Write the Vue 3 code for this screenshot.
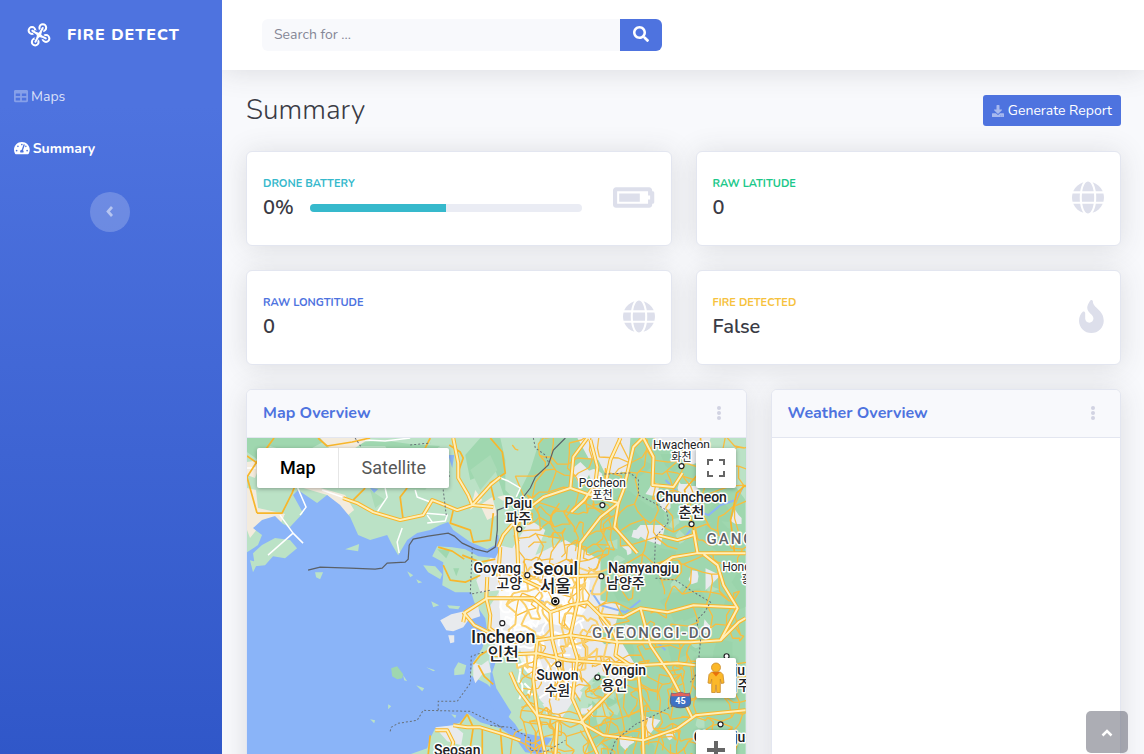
<script setup>
import { ref } from 'vue'

const query = ref('')

const globe = {
  box: '0 0 496 512',
  path: 'M336.5 160C322 70.7 287.8 8 248 8s-74 62.7-88.5 152h177zM152 256c0 22.2 1.2 43.5 3.3 64h185.3c2.1-20.5 3.3-41.8 3.3-64s-1.2-43.5-3.3-64H155.3c-2.1 20.5-3.3 41.8-3.3 64zm324.7-96c-28.6-67.9-86.5-120.4-158-141.6 24.4 33.8 41.2 84.7 50 141.6h108zM177.2 18.4C105.8 39.6 47.8 92.1 19.3 160h108c8.7-56.9 25.5-107.8 49.9-141.6zM487.4 192H372.7c2.1 21 3.3 42.5 3.3 64s-1.2 43-3.3 64h114.6c5.5-20.5 8.6-41.8 8.6-64s-3.1-43.5-8.5-64zM120 256c0-21.5 1.2-43 3.3-64H8.6C3.2 212.5 0 233.8 0 256s3.2 43.5 8.6 64h114.6c-2-21-3.2-42.5-3.2-64zm39.5 96c14.5 89.3 48.7 152 88.5 152s74-62.7 88.5-152h-177zm159.3 141.6c71.4-21.2 129.4-73.7 158-141.6h-108c-8.8 56.9-25.6 107.8-50 141.6zM19.3 352c28.6 67.9 86.5 120.4 158 141.6-24.4-33.8-41.2-84.7-50-141.6h-108z'
}

const cards = [
  {
    label: 'Drone battery', value: '0%', tone: 'info', progress: 50,
    icon: {
      box: '0 0 640 512',
      path: 'M544 160v64h32v64h-32v64H64V160h480m16-64H48c-26.51 0-48 21.49-48 48v224c0 26.51 21.49 48 48 48h512c26.51 0 48-21.49 48-48v-16h8c13.255 0 24-10.745 24-24V184c0-13.255-10.745-24-24-24h-8v-16c0-26.51-21.49-48-48-48zm-144 96H96v128h320V192z'
    }
  },
  { label: 'Raw latitude', value: '0', tone: 'success', icon: globe },
  { label: 'Raw longtitude', value: '0', tone: 'primary', icon: globe },
  {
    label: 'Fire detected', value: 'False', tone: 'warning',
    icon: {
      box: '0 0 384 512',
      path: 'M216 23.86c0-23.8-30.65-32.77-44.15-13.04C48 191.85 224 200 224 288c0 35.63-29.11 64.46-64.85 63.99-35.17-.45-63.15-29.77-63.15-64.94v-85.51c0-21.7-26.47-32.23-41.43-16.5C27.8 213.16 0 261.33 0 320c0 105.87 86.13 192 192 192s192-86.13 192-192c0-170.29-168-193-168-296.14z'
    }
  }
]

// Map geometry: main highways
const highways = [
  '453,438 458,463 458,478 468,495 472,505 493,507',
  '343,498 357,503 373,512 400,520 423,515 432,500 440,503 457,510 472,505 490,485 500,477',
  '587,438 573,457 570,488 543,497 522,513 515,527 517,545 518,570',
  '642,438 633,447 623,490 618,503 600,517 580,543 577,570',
  '590,440 597,467 595,483 584,500 571,512',
  '620,438 610,460 606,480 590,495',
  '643,438 653,457 652,485 673,487 682,473',
  '500,547 498,575 503,590',
  '522,513 503,535 498,547',
  '570,488 590,495 618,503',
  '618,503 614,527 637,553',
  '693,530 697,553 745,553',
  '697,553 672,557 657,567 640,565 618,575',
  '657,535 677,540 693,535',
  '513,598 533,598 550,612 570,605 587,602 600,615 623,617 640,608 667,612 693,605 735,607',
  '577,565 578,598 570,635 577,658 572,698 587,732 597,754',
  '500,570 520,578 545,590 570,576 600,575',
  '490,640 537,640 570,635 617,642 690,642 720,640 737,608 723,585 717,565 703,554',
  '490,655 537,653 567,660 637,665 677,663 695,665',
  '640,608 650,645 670,675 687,708 692,718',
  '510,672 517,688 537,715 580,722 603,735 643,740 677,728 695,715 745,710',
  '643,754 642,715 637,665',
  '617,642 615,655 634,668 597,705 580,722',
  '537,640 533,680 537,715 545,754',
  '557,722 555,754',
  '463,622 465,612 487,598 500,598 513,598',
  '487,577 486,598 490,615 489,628 505,640',
  '463,612 474,625 488,632',
  '600,615 612,630 617,642',
  '550,612 552,640 560,672 557,700',
  '453,725 467,727 480,727 500,733 520,740',
  '435,730 447,730 453,742 450,754',
  '720,640 738,622 745,618'
]

const byways = [
  '257,513 247,477 258,460 274,438', '257,513 282,513 292,493 296,483',
  '403,520 400,497 407,488', '353,500 365,488',
  '453,510 450,523 470,530 473,542 490,540 493,513',
  '318,438 327,446 352,442 370,438', '430,438 425,448', '247,456 257,463',
  '490,438 502,452 505,473 490,483 494,500',
  '443,565 450,580 465,582 480,575', '462,555 480,562 495,559',
  '438,547 452,551 464,559', '473,664 480,655 488,650', '478,665 484,676 493,684',
  '467,714 460,724', '467,714 473,727 469,754', '482,728 482,754', '430,735 428,754',
  '500,728 502,754', '449,445 460,452 463,458 458,472',
  '700,438 701,470 684,490 693,530', '745,485 736,493 730,520 734,553'
]

const paleRoads = [
  '280,515 293,533 268,555', '293,533 303,543', '377,512 387,497 385,488',
  '402,528 397,542 399,553', '423,513 447,515 445,521 427,523', '427,515 432,522',
  '296,484 306,507 300,515', '365,440 385,441 410,438', '322,490 342,497',
  '415,490 417,497 430,502', '500,478 508,481 520,488 516,497', '247,468 256,468'
]

// Secondary road mesh over the inland area, from a small seeded generator
let seed = 29
function rand() {
  seed = (seed * 16807) % 2147483647
  return seed / 2147483647
}

function mesh(x0, y0, cols, rows, step, keep) {
  const pts = []
  for (let r = 0; r <= rows; r++) {
    const line = []
    for (let c = 0; c <= cols; c++) {
      line.push([
        Math.round(x0 + c * step + (rand() - 0.5) * step),
        Math.round(y0 + r * step + (rand() - 0.5) * step)
      ])
    }
    pts.push(line)
  }
  let d = ''
  const join = (a, b) => {
    const mx = Math.round((a[0] + b[0]) / 2 + (rand() - 0.5) * step * 0.5)
    const my = Math.round((a[1] + b[1]) / 2 + (rand() - 0.5) * step * 0.5)
    d += `M${a}L${mx},${my}L${b}`
  }
  for (let r = 0; r <= rows; r++) {
    for (let c = 0; c <= cols; c++) {
      if (c < cols && rand() < keep) join(pts[r][c], pts[r][c + 1])
      if (r < rows && rand() < keep) join(pts[r][c], pts[r + 1][c])
    }
  }
  return d
}

const minorRoads = mesh(520, 440, 14, 20, 17, 0.68)
const northRoads = mesh(522, 500, 8, 7, 11, 0.55)
const cityRoads = mesh(512, 568, 8, 8, 12, 0.6)
const southRoads = mesh(526, 664, 14, 8, 12, 0.55)
const cityStreets = mesh(503, 575, 11, 10, 7, 0.55)
const suburbStreets = mesh(518, 655, 7, 5, 8, 0.3)

function patches(x0, y0, w, h, n, size) {
  let d = ''
  for (let i = 0; i < n; i++) {
    const cx = x0 + rand() * w
    const cy = y0 + rand() * h
    for (let k = 0; k < 7; k++) {
      const a = (k / 7) * Math.PI * 2
      const s = size * (0.35 + rand())
      d += `${k ? 'L' : 'M'}${Math.round(cx + Math.cos(a) * s)},${Math.round(cy + Math.sin(a) * s)}`
    }
    d += 'Z'
  }
  return d
}

const forest = patches(600, 445, 150, 310, 24, 17)
const meadows = patches(590, 450, 155, 330, 26, 6)
const towns = patches(525, 445, 225, 310, 22, 7)
const hills = patches(525, 650, 100, 100, 12, 10)

const places = [
  { en: 'Paju', ko: '파주', x: 518, y: 508, kind: 'city', dot: [519, 529] },
  { en: 'Pocheon', ko: '포천', x: 602, y: 487, kind: 'town', dot: [602, 505] },
  { en: 'Hwacheon', ko: '화천', x: 681, y: 449, kind: 'town', dot: [681, 466] },
  { en: 'Chuncheon', ko: '춘천', x: 691, y: 502, kind: 'city', dot: [691, 524] },
  { en: 'Goyang', ko: '고양', x: 497, y: 573, kox: 509, kind: 'city', dot: [527, 575] },
  { en: 'Seoul', ko: '서울', x: 555, y: 575, kind: 'capital' },
  { en: 'Namyangju', ko: '남양주', x: 643, y: 573, kox: 625, kind: 'city', dot: [601, 576] },
  { en: 'Incheon', ko: '인천', x: 503, y: 643, kind: 'capital', dot: [502, 623] },
  { en: 'Suwon', ko: '수원', x: 557, y: 680, kind: 'city', dot: [558, 664] },
  { en: 'Yongin', ko: '용인', x: 624, y: 675, kox: 614, kind: 'city', dot: [597, 677] },
  { en: 'Hong', ko: '홍', x: 736, y: 571, kox: 746, kind: 'town' },
  { en: 'Seosan', ko: '서산', x: 457, y: 755, kind: 'city' },
  { en: 'Yeoju', ko: '여주', x: 727, y: 675, kox: 737, kind: 'city', dot: [726, 656] },
  { en: 'Chungju', ko: '충주', x: 719, y: 742, kind: 'city', dot: [720, 724] }
]

const koShift = { capital: 17, city: 15, town: 12 }
</script>

<template>
  <div class="shell">
    <aside class="sidebar">
      <a class="brand" href="#">
        <svg class="drone" viewBox="0 0 24 24" aria-hidden="true">
          <g class="rotors">
            <circle cx="5" cy="7.500" r="3.400" />
            <circle cx="15.800" cy="4.700" r="3.400" />
            <circle cx="19" cy="15.500" r="3.400" />
            <circle cx="8.200" cy="19" r="3.400" />
          </g>
          <path class="arm-gap" d="M7 8.800 12 12 15 6.500M9 17 12 12 17.500 15" />
          <path class="arms" d="M5.300 7.700 12 12 15.700 5M8.400 18.700 12 12 18.800 15.400" />
          <path fill="currentColor" fill-rule="evenodd" d="M8.800 9 12 9.800 14.800 8.600 14.300 11.500 15.400 14.600 12.300 14.200 9.500 15.500 9.800 12ZM11.200 11.200V13H13V11.200Z" />
        </svg>
        <span>FIRE DETECT</span>
      </a>
      <nav class="menu">
        <a class="item" href="#maps">
          <svg class="item-icon" viewBox="0 0 512 512" aria-hidden="true"><path fill="currentColor" d="M464 32H48C21.490 32 0 53.490 0 80v352c0 26.510 21.490 48 48 48h416c26.510 0 48-21.490 48-48V80c0-26.510-21.490-48-48-48zM224 416H64v-96h160v96zm0-160H64v-96h160v96zm224 160H288v-96h160v96zm0-160H288v-96h160v96z" /></svg>
          <span>Maps</span>
        </a>
        <a class="item active" href="#summary" aria-current="page">
          <svg class="item-icon" viewBox="0 0 576 512" aria-hidden="true"><path fill="currentColor" d="M288 32C128.940 32 0 160.940 0 320c0 52.800 14.250 102.260 39.060 144.800 5.610 9.620 16.300 15.200 27.440 15.200h443c11.140 0 21.830-5.580 27.440-15.200C561.750 422.260 576 372.800 576 320c0-159.060-128.940-288-288-288zm0 64c14.710 0 26.580 10.130 30.320 23.650-1.110 2.260-2.640 4.230-3.450 6.670l-9.220 27.670c-5.130 3.490-10.970 6.010-17.640 6.010-17.670 0-32-14.330-32-32S270.330 96 288 96zM96 384c-17.670 0-32-14.330-32-32s14.330-32 32-32 32 14.330 32 32-14.330 32-32 32zm48-160c-17.670 0-32-14.330-32-32s14.330-32 32-32 32 14.330 32 32-14.330 32-32 32zm246.770-72.410l-61.330 184C343.130 347.330 352 364.540 352 384c0 11.720-3.380 22.550-8.880 32H232.880c-5.500-9.450-8.880-20.280-8.880-32 0-33.940 26.500-61.430 59.900-63.590l61.340-184.010c4.170-12.560 17.730-19.450 30.360-15.170 12.570 4.190 19.350 17.790 15.170 30.360zm14.660 57.200l15.520-46.550c3.470-1.290 7.130-2.230 11.050-2.230 17.670 0 32 14.330 32 32s-14.330 32-32 32c-11.380-.010-20.890-6.280-26.570-15.220zM480 384c-17.670 0-32-14.330-32-32s14.330-32 32-32 32 14.330 32 32-14.330 32-32 32z" /></svg>
          <span>Summary</span>
        </a>
      </nav>
      <button class="collapse" type="button" aria-label="Collapse sidebar">
        <svg viewBox="0 0 12 14" width="12" height="14" aria-hidden="true"><path d="M8 2 4 6.500 8 11" fill="none" stroke="currentColor" stroke-width="2.700" /></svg>
      </button>
    </aside>

    <div class="page">
      <header class="topbar">
        <form class="search" @submit.prevent>
          <input v-model="query" type="text" placeholder="Search for ..." aria-label="Search" />
          <button type="submit" aria-label="Search">
            <svg viewBox="0 0 512 512" width="16" height="16" aria-hidden="true"><path fill="currentColor" d="M505 442.700L405.300 343c-4.500-4.500-10.600-7-17-7H372c27.600-35.300 44-79.700 44-128C416 93.100 322.900 0 208 0S0 93.100 0 208s93.100 208 208 208c48.300 0 92.700-16.400 128-44v16.300c0 6.400 2.500 12.500 7 17l99.700 99.700c9.400 9.400 24.600 9.400 33.900 0l28.300-28.300c9.400-9.400 9.400-24.600.1-34zM208 336c-70.700 0-128-57.200-128-128 0-70.700 57.200-128 128-128 70.700 0 128 57.200 128 128 0 70.700-57.200 128-128 128z" /></svg>
          </button>
        </form>
      </header>

      <main class="content">
        <div class="heading">
          <h1>Summary</h1>
          <button class="report" type="button">
            <svg viewBox="0 0 512 512" width="12" height="12" aria-hidden="true"><path fill="currentColor" d="M216 0h80c13.300 0 24 10.700 24 24v168h87.700c17.800 0 26.700 21.500 14.100 34.100L269.700 378.300c-7.500 7.500-19.800 7.500-27.300 0L90.100 226.100c-12.600-12.600-3.700-34.100 14.100-34.100H192V24c0-13.300 10.700-24 24-24zm296 376v112c0 13.300-10.700 24-24 24H24c-13.300 0-24-10.700-24-24V376c0-13.300 10.700-24 24-24h146.700l49 49c20.100 20.100 52.500 20.100 72.600 0l49-49H488c13.300 0 24 10.700 24 24zm-124 88c0-11-9-20-20-20s-20 9-20 20 9 20 20 20 20-9 20-20zm64 0c0-11-9-20-20-20s-20 9-20 20 9 20 20 20 20-9 20-20z" /></svg>
            <span>Generate Report</span>
          </button>
        </div>

        <section class="stats">
          <article v-for="card in cards" :key="card.label" class="card stat">
            <div class="stat-text">
              <h2 class="stat-label" :class="card.tone">{{ card.label.toUpperCase() }}</h2>
              <div class="stat-row">
                <span class="stat-value">{{ card.value }}</span>
                <div v-if="card.progress" class="track" role="progressbar" aria-label="Battery">
                  <div class="fill" :style="{ width: card.progress + '%' }"></div>
                </div>
              </div>
            </div>
            <svg class="stat-icon" :viewBox="card.icon.box" aria-hidden="true">
              <path fill="currentColor" :d="card.icon.path" />
            </svg>
          </article>
        </section>

        <section class="panels">
          <article class="card panel">
            <header class="panel-head">
              <h2>Map Overview</h2>
              <button class="dots" type="button" aria-label="Map options">
                <svg viewBox="0 0 6 14" width="6" height="14" aria-hidden="true"><g fill="currentColor"><circle cx="3" cy="2" r="2" /><circle cx="3" cy="7" r="2" /><circle cx="3" cy="12" r="2" /></g></svg>
              </button>
            </header>
            <div class="map">
              <svg class="map-art" viewBox="247 438 498 460" preserveAspectRatio="xMidYMin slice" aria-label="Map of the Seoul area">
                <rect x="247" y="438" width="498" height="460" fill="#bbe2c6" />
                <path fill="#9fd7af" d="M247,438H330L312,448 290,452 270,446 258,460 247,452ZM340,446 380,440 410,444 440,446 420,460 400,470 385,446ZM480,438H745V898H600L585,720 600,640 590,600 575,570 560,540 530,530 505,500 495,470 470,480 465,455Z" />
                <path fill="#bbe2c6" d="M500,438 540,438 530,470 515,500 505,490 505,460ZM745,438 745,500 730,480 720,460 700,438Z" />
                <path fill="#aadbb7" d="M470,470 490,455 497,470 480,490ZM425,450 445,448 440,470 425,490 405,489ZM370,490 385,500 375,508Z" />
                <path :d="hills" fill="#bbe2c6" />
                <path :d="forest" fill="#93cfa5" opacity="0.4" />
                <path :d="meadows" fill="#bbe2c6" opacity="0.75" />
                <path fill="#f3ebdd" d="M320,438H370L355,448 330,449ZM247,488 256,490 258,508 285,514 280,525 262,523 250,538 247,530ZM293,486 310,485 345,495 354,510 348,515 327,495 300,487ZM480,505 492,497 497,515 487,520ZM247,462 262,460 255,478 247,475ZM475,490 482,500 470,510ZM497,497 505,495 503,501Z" />
                <path fill="#e8eaed" d="M577,438H630L628,462 618,475 604,472 598,460 588,458ZM653,438H710L705,460 690,465 682,450 665,448ZM570,470 580,462 590,472 582,488ZM640,525 665,525 660,545 645,540 634,532ZM498,545 512,548 530,520 545,530 535,555 565,540 600,560 600,600 620,605 615,625 590,630 610,650 600,670 580,690 560,720 540,700 520,650 500,655 490,635 490,605 500,590 480,592 476,580ZM705,568 720,575 705,590ZM590,650 620,640 635,665 620,680 600,675ZM640,715 660,720 645,740Z" />
                <path :d="towns" fill="#e8eaed" />
                <path fill="#fff" opacity="0.7" d="M498,582 520,575 545,580 572,570 590,580 585,610 570,628 545,622 520,632 500,620ZM518,655 540,660 545,675 525,670Z" />

                <path fill="#8ab4f8" d="M247,552 258,545 262,535 253,528 262,520 275,516 283,524 290,527 303,513 293,495 298,490 317,503 327,495 340,505 350,517 358,535 370,540 387,535 392,545 398,555 407,540 417,533 430,530 440,525 448,522 453,530 470,542 487,549 495,545 497,535 499,550 495,558 478,556 465,549 452,547 437,546 432,556 443,562 443,575 442,585 455,592 471,592 474,602 485,618 487,632 482,648 473,662 470,675 487,684 493,690 495,702 515,724 520,732 534,735 552,738 540,754 525,752 515,738 500,728 480,722 467,713 460,722 453,725 435,728 430,738 427,748 410,754 400,898 247,898Z" />
                <path fill="#8ab4f8" d="M490,655 496,660 492,672 496,688 511,712 505,722 490,705ZM448,455 454,455 452,468ZM370,488 378,489 374,493Z" />
                <path fill="none" stroke="#8ab4f8" stroke-width="2" d="M690,530 682,540M742,488 735,500 720,505 708,515 700,512M590,590 600,605 625,612 640,600M655,640 665,650M497,535 498,547M538,600 565,608M665,480 675,490 678,500" />
                <path fill="#bbe2c6" d="M253,553 262,545 275,538 290,540 297,548 285,558 273,556 265,565 255,566ZM315,572 323,572 320,579 316,577ZM250,560 258,562 253,572ZM423,565 435,566 442,574 440,579 428,572ZM407,571 413,575 410,577ZM416,579 422,582 418,583ZM431,601 439,605 433,607ZM447,605 460,606 458,609 449,608ZM426,667 435,670 433,671ZM454,669 458,662 466,665 464,674 454,675ZM416,685 424,688 422,691ZM388,704 391,706 388,709ZM370,719 375,720 374,723ZM403,675 407,681 404,680ZM284,515 293,520 287,527ZM451,714 456,715 455,718ZM345,549 359,544 358,551Z" />
                <path fill="#9fd7af" d="M391,668 397,666 403,674 402,678 397,679 392,676ZM437,549 450,550 446,558ZM453,568 459,568 456,576Z" />
                <path fill="#e8eaed" d="M440,620 451,614 464,611 478,606 480,616 468,620 463,627 453,631 446,630ZM448,635 454,635 454,642 450,643ZM473,662 481,665 488,660 491,672 482,674 475,683 473,677ZM435,727 453,725 463,733 461,745 447,741 440,733Z" />

                <path :d="cityStreets" class="street" />
                <path :d="suburbStreets" class="street" />
                <path :d="minorRoads" class="minor" />
                <path :d="northRoads" class="minor" />
                <path :d="southRoads" class="minor" />
                <path :d="cityRoads" class="minor soft" />
                <polyline v-for="(p, i) in paleRoads" :key="'p' + i" :points="p" class="pale" />
                <polyline v-for="(p, i) in byways" :key="'b' + i" :points="p" class="byway" />
                <polyline v-for="(p, i) in highways" :key="'c' + i" :points="p" class="casing" />
                <polyline v-for="(p, i) in highways" :key="'h' + i" :points="p" class="highway" />

                <path class="border" d="M308,570 320,567 350,568 375,569 382,568 387,563 405,562 408,559 409,545 413,539 428,536 448,533 454,536 462,543 475,549 487,552 495,547 497,530 497,510 508,506 523,497 530,488 535,477 548,465 553,450 565,438" />
                <path class="bounds" d="M355,438 361,447M410,445 430,443M447,455 449,478 443,490 446,515M533,438 535,448 545,455 548,462M604,474 630,473 638,480 638,495 652,502 666,510 668,522 655,537 654,565M472,548 470,594 490,590M390,731 391,727 398,723 417,720 423,710 470,711 502,727M438,710 438,701 457,701 470,683 471,656 483,652M490,725 510,727 530,738 530,750 546,751 565,740M655,578 675,580 690,590 710,602 704,612 696,620 700,640 697,672 690,682M610,754 615,740 635,724 662,711 682,700" />

                <g v-for="p in places" :key="p.en" :class="['place', p.kind]">
                  <circle v-if="p.dot" :cx="p.dot[0]" :cy="p.dot[1]" r="2.500" class="dot" />
                  <text :x="p.x" :y="p.y">{{ p.en }}</text>
                  <text :x="p.kox || p.x" :y="p.y" :dy="koShift[p.kind]" class="ko">{{ p.ko }}</text>
                </g>
                <circle cx="555" cy="601" r="3.500" fill="#fff" stroke="#111" stroke-width="1.500" />
                <circle cx="555" cy="601" r="1.700" fill="#111" />
                <text x="652" y="638" class="region">GYEONGGI-DO</text>
                <text x="706" y="544" class="region start">GANGWON</text>

                <path fill="#3e72c4" stroke="#5b6b82" stroke-width="1" d="M671,693Q675,694 680,692Q685,694 689,693Q692,705 687,706Q680,709 673,706Q668,705 671,693Z" />
                <path fill="#e2625b" d="M671,693Q675,694 680,692Q685,694 689,693L689,696H671Z" />
                <text x="680" y="704" class="shield">45</text>
              </svg>

              <div class="map-types">
                <button type="button" class="current" aria-pressed="true">Map</button>
                <button type="button" aria-pressed="false">Satellite</button>
              </div>
              <button class="map-btn full" type="button" aria-label="Toggle fullscreen view">
                <svg viewBox="0 0 18 18" width="18" height="18" aria-hidden="true"><path fill="#666" d="M0 0v6h2V2h4V0H0zm16 0h-4v2h4v4h2V0h-2zm0 16h-4v2h6v-6h-2v4zM2 12H0v6h6v-2H2v-4z" /></svg>
              </button>
              <button class="map-btn person" type="button" aria-label="Street View">
                <svg viewBox="0 0 18 32" width="18" height="32" aria-hidden="true">
                  <path fill="#fbb829" stroke="#c98a2a" stroke-width="0.800" d="M4.500 10H13.500L16 12.500 17 21 14.300 21.500 13.300 17V30.500H9.700L9.300 23H8.700L8.300 30.500H4.700V17L3.700 21.500 1 21 2 12.500Z" />
                  <path fill="#e8710a" d="M5 10H13L9 14.500Z" />
                  <circle cx="9" cy="5.500" r="4.500" fill="#fbb829" stroke="#c98a2a" stroke-width="0.800" />
                </svg>
              </button>
              <button class="map-btn zoom" type="button" aria-label="Zoom in">
                <svg viewBox="0 0 18 18" width="18" height="18" aria-hidden="true"><path fill="#666" d="M18 7h-7V0H7v7H0v4h7v7h4v-7h7z" /></svg>
              </button>
            </div>
          </article>

          <article class="card panel">
            <header class="panel-head">
              <h2>Weather Overview</h2>
              <button class="dots" type="button" aria-label="Weather options">
                <svg viewBox="0 0 6 14" width="6" height="14" aria-hidden="true"><g fill="currentColor"><circle cx="3" cy="2" r="2" /><circle cx="3" cy="7" r="2" /><circle cx="3" cy="12" r="2" /></g></svg>
              </button>
            </header>
          </article>
        </section>
      </main>
    </div>

    <a class="to-top" href="#" aria-label="Back to top">
      <svg viewBox="0 0 14 10" width="14" height="10" aria-hidden="true"><path d="M2.500 8.500 7 4 11.500 8.500" fill="none" stroke="currentColor" stroke-width="2.500" /></svg>
    </a>
  </div>
</template>

<style>
html,
body,
#app {
  height: 100%;
}
body {
  margin: 0;
}
</style>

<style scoped>
.shell {
  display: flex;
  align-items: flex-start;
  height: 100%;
  overflow-y: auto;
  scrollbar-width: none;
  background: #f8f9fc;
  color: #3a3b45;
  font-family: Nunito, Lato, "Open Sans", sans-serif;
  font-size: 14px;
}
.shell *,
.shell *::before {
  box-sizing: border-box;
}
button,
input {
  font: inherit;
  border: 0;
}
button {
  cursor: pointer;
  padding: 0;
}
a {
  text-decoration: none;
}
h1,
h2 {
  margin: 0;
}
svg {
  display: block;
  flex: none;
}
.sidebar {
  position: relative;
  z-index: 1;
  flex: 0 0 222px;
  min-height: 1058px;
  background: linear-gradient(180deg, #4e73df 10%, #224abe 100%);
  display: flex;
  flex-direction: column;
}
.brand {
  display: flex;
  align-items: center;
  gap: 16px;
  height: 70px;
  padding-left: 27px;
  color: #fff;
  font-size: 16px;
  font-weight: 800;
  letter-spacing: 1px;
}
.drone {
  width: 24px;
  height: 24px;
}
.rotors,
.arms {
  fill: none;
  stroke: currentColor;
  stroke-width: 2px;
}
.arms {
  stroke-linecap: round;
}
.arm-gap {
  fill: none;
  stroke: #4e73df;
  stroke-width: 4px;
}
.item {
  display: flex;
  align-items: center;
  gap: 3px;
  height: 52px;
  padding: 0 14px;
  color: rgba(255, 255, 255, 0.8);
}
.item-icon {
  height: 14px;
  opacity: 0.4;
}
.item.active {
  color: #fff;
  font-weight: 700;
}
.item.active .item-icon {
  opacity: 1;
}
.collapse {
  display: grid;
  place-items: center;
  width: 40px;
  height: 40px;
  margin: 18px auto 0 90px;
  border-radius: 50%;
  background: rgba(255, 255, 255, 0.2);
  color: rgba(255, 255, 255, 0.5);
}
.page {
  flex: 1;
  min-width: 0;
}
.topbar {
  display: flex;
  align-items: center;
  height: 70px;
  padding: 0 40px;
  background: #fff;
  box-shadow: 0 2px 28px rgba(58, 59, 69, 0.15);
}
.search {
  display: flex;
  flex: 0 1 400px;
  height: 32px;
}
.search input {
  flex: 1;
  min-width: 0;
  padding: 0 12px 2px;
  border-radius: 6px 0 0 6px;
  background: #f8f9fc;
  color: #6e707e;
}
.search input::placeholder {
  color: #858796;
  opacity: 1;
}
.search button {
  display: grid;
  place-items: center;
  width: 42px;
  padding-bottom: 2px;
  border-radius: 0 6px 6px 0;
  background: #4e73df;
  color: #fff;
}
.content {
  padding: 24px 23px 24px 24px;
}
.heading {
  display: flex;
  align-items: center;
  justify-content: space-between;
  height: 33px;
  margin-bottom: 24px;
}
h1 {
  padding-bottom: 2px;
  font-size: 28px;
  font-weight: 300;
  line-height: 32px;
}
.report {
  display: flex;
  align-items: center;
  gap: 4px;
  height: 31px;
  padding: 0 9px;
  border-radius: 3px;
  background: #4e73df;
  color: #fff;
}
.report svg {
  opacity: 0.5;
}
.card {
  border: 1px solid #e3e6f0;
  border-radius: 6px;
  background: #fff;
  box-shadow: 0 2px 28px rgba(58, 59, 69, 0.15);
}
.stats {
  display: grid;
  grid-template-columns: 1fr 1fr;
  gap: 24px;
  margin-bottom: 24px;
}
.stat {
  display: flex;
  align-items: center;
  padding: 23px 16px 24px;
}
.stat-text {
  flex: 1;
}
.stat-label {
  margin-bottom: 3px;
  font-size: 11px;
  font-weight: 700;
  line-height: 17px;
}
.info { color: #36b9cc; }
.success { color: #1cc88a; }
.primary { color: #4e73df; }
.warning { color: #f6c23e; }
.stat-row {
  display: flex;
  align-items: center;
  gap: 16px;
  line-height: 26px;
}
.stat-value {
  font-size: 20px;
  font-weight: 600;
}
.track {
  flex: 1;
  height: 8px;
  margin-right: 31px;
  border-radius: 5px;
  background: #eaecf4;
  overflow: hidden;
}
.fill {
  height: 100%;
  background: #36b9cc;
}
.stat-icon {
  height: 33px;
  margin-bottom: 2px;
  color: #dddfeb;
}
.panels {
  display: grid;
  grid-template-columns: 10fr 7fr;
  gap: 24px;
}
.panel {
  overflow: hidden;
}
.panel-head {
  display: flex;
  align-items: center;
  justify-content: space-between;
  height: 48px;
  padding: 0 16px 2px;
  border-bottom: 1px solid #e3e6f0;
  background: #f8f9fc;
}
.panel-head h2 {
  color: #4e73df;
  font-size: 16px;
  font-weight: 700;
}
.dots {
  display: grid;
  place-items: center;
  width: 22px;
  height: 22px;
  background: none;
  color: #d1d3e2;
}
.map {
  position: relative;
  height: 460px;
  font-family: Roboto, "Noto Sans CJK KR", sans-serif;
}
.map-art {
  width: 100%;
  height: 100%;
}
.map-art polyline,
.map-art .minor,
.map-art .street {
  fill: none;
  stroke-linejoin: round;
}
.minor { stroke: #f9bd3f; stroke-width: 1.3px; }
.minor.soft { stroke: #fbd06c; stroke-width: 2px; }
.street { stroke: #fff; stroke-width: 2px; }
.pale { stroke: #fff; stroke-width: 1.5px; }
.byway { stroke: #f8b62b; stroke-width: 1.7px; }
.casing { stroke: #f8b62b; stroke-width: 4px; }
.highway { stroke: #feefb9; stroke-width: 2px; }
.border { fill: none; stroke: #5a6068; stroke-width: 1.2px; }
.bounds { fill: none; stroke: #687078; stroke-width: 1px; stroke-dasharray: 2 2; }
.map-art text {
  fill: #202124;
  stroke: #fff;
  stroke-width: 3px;
  stroke-linejoin: round;
  paint-order: stroke;
  text-anchor: middle;
}
.place { font-size: 14px; font-weight: 500; }
.place.town { font-size: 12px; font-weight: 400; }
.place.town .ko { font-size: 11px; }
.place.capital { font-size: 18px; }
.place.capital .ko { font-size: 17px; }
.dot { fill: #fff; stroke: #202124; stroke-width: 1.2px; }
.map-art .region {
  fill: #5f6368;
  font-size: 15px;
  font-weight: 500;
  letter-spacing: 2px;
}
.map-art .start { text-anchor: start; }
.map-art .shield {
  fill: #fff;
  stroke: none;
  font-size: 9px;
  font-weight: 700;
}
.map-types {
  position: absolute;
  top: 10px;
  left: 10px;
  display: flex;
  height: 40px;
  border-radius: 2px;
  background: #fff;
  box-shadow: 0 1px 4px rgba(0, 0, 0, 0.3);
  font-size: 18px;
}
.map-types button {
  padding: 0 23px 1px;
  background: none;
  color: #565656;
}
.map-types .current {
  padding-right: 22px;
  color: #000;
  font-weight: 500;
  border-right: 1px solid #e6e6e6;
}
.map-btn {
  position: absolute;
  right: 10px;
  display: grid;
  place-items: center;
  width: 40px;
  height: 40px;
  border-radius: 2px;
  background: #fff;
  box-shadow: 0 1px 4px rgba(0, 0, 0, 0.3);
}
.full { top: 10px; }
.person { top: 220px; }
.zoom { top: 292px; }
.to-top {
  position: fixed;
  right: 16px;
  bottom: 1px;
  display: grid;
  place-items: center;
  width: 42px;
  height: 42px;
  border-radius: 5px;
  background: rgba(90, 92, 105, 0.5);
  color: #fff;
}
</style>
